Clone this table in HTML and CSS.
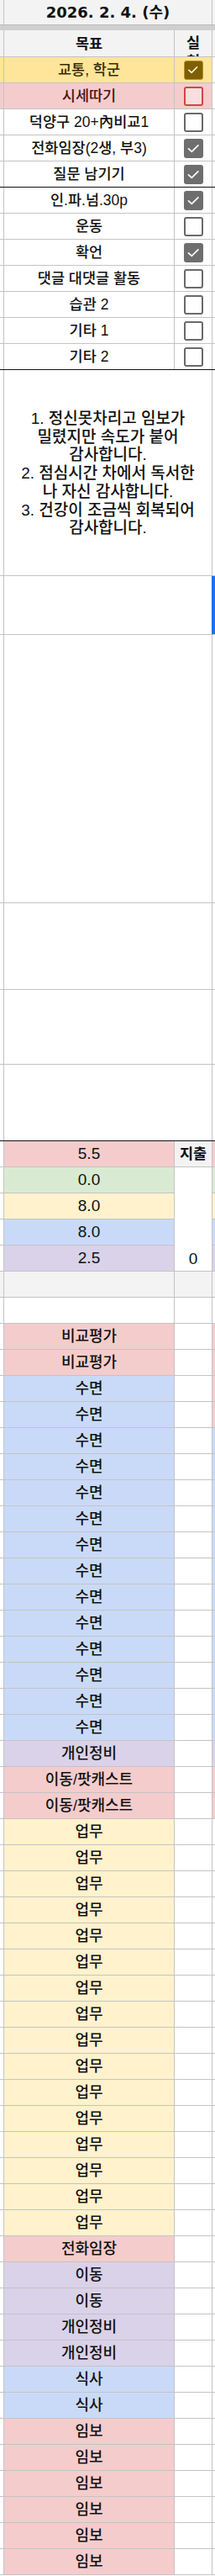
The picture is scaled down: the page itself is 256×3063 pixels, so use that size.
FILE: index.html
```html
<!DOCTYPE html>
<html lang="ko">
<head>
<meta charset="utf-8">
<link rel="stylesheet" href="styles.css">
</head>
<body>
<div class="sheet">
  <div class="row date">
    <div class="c gray"></div>
    <div class="c gray span2 datetxt">2026. 2. 4. (수)</div>
    <div class="c gray"></div>
  </div>
  <div class="freeze"></div>
  <div class="row head">
    <div class="c gray"></div>
    <div class="c gray bold">목표</div>
    <div class="c gray bold hchk">실<br>천</div>
    <div class="c gray"></div>
  </div>

  <div class="goals">
    <div class="row">
      <div class="c y2"></div>
      <div class="c y2 dk">교통, 학군</div>
      <div class="c y2"><span class="cb on gold"><svg viewBox="0 0 23 23"><path d="M5.5 11.8l3.8 3.6 7.6-7.6"/></svg></span></div>
      <div class="c"></div>
    </div>
    <div class="row">
      <div class="c pink"></div>
      <div class="c pink rd">시세따기</div>
      <div class="c pink"><span class="cb red"></span></div>
      <div class="c"></div>
    </div>
    <div class="row">
      <div class="c"></div>
      <div class="c">덕양구 20+內비교1</div>
      <div class="c"><span class="cb"></span></div>
      <div class="c"></div>
    </div>
    <div class="row">
      <div class="c"></div>
      <div class="c">전화임장(2생, 부3)</div>
      <div class="c"><span class="cb on"><svg viewBox="0 0 23 23"><path d="M5.5 11.8l3.8 3.6 7.6-7.6"/></svg></span></div>
      <div class="c"></div>
    </div>
    <div class="row thick">
      <div class="c"></div>
      <div class="c">질문 남기기</div>
      <div class="c"><span class="cb on"><svg viewBox="0 0 23 23"><path d="M5.5 11.8l3.8 3.6 7.6-7.6"/></svg></span></div>
      <div class="c"></div>
    </div>
    <div class="row">
      <div class="c"></div>
      <div class="c">인.파.넘.30p</div>
      <div class="c"><span class="cb on"><svg viewBox="0 0 23 23"><path d="M5.5 11.8l3.8 3.6 7.6-7.6"/></svg></span></div>
      <div class="c"></div>
    </div>
    <div class="row">
      <div class="c"></div>
      <div class="c">운동</div>
      <div class="c"><span class="cb"></span></div>
      <div class="c"></div>
    </div>
    <div class="row">
      <div class="c"></div>
      <div class="c">확언</div>
      <div class="c"><span class="cb on"><svg viewBox="0 0 23 23"><path d="M5.5 11.8l3.8 3.6 7.6-7.6"/></svg></span></div>
      <div class="c"></div>
    </div>
    <div class="row">
      <div class="c"></div>
      <div class="c">댓글 대댓글 활동</div>
      <div class="c"><span class="cb"></span></div>
      <div class="c"></div>
    </div>
    <div class="row">
      <div class="c"></div>
      <div class="c">습관 2</div>
      <div class="c"><span class="cb"></span></div>
      <div class="c"></div>
    </div>
    <div class="row">
      <div class="c"></div>
      <div class="c">기타 1</div>
      <div class="c"><span class="cb"></span></div>
      <div class="c"></div>
    </div>
    <div class="row thick">
      <div class="c"></div>
      <div class="c">기타 2</div>
      <div class="c"><span class="cb"></span></div>
      <div class="c"></div>
    </div>
  </div>

  <div class="row h245">
    <div class="c"></div>
    <div class="c span2 note">1. 정신못차리고 임보가<br>밀렸지만 속도가 붙어<br>감사합니다.<br>2. 점심시간 차에서 독서한<br>나 자신 감사합니다.<br>3. 건강이 조금씩 회복되어<br>감사합니다.</div>
    <div class="c"></div>
  </div>
  <div class="row h70">
    <div class="c"></div>
    <div class="c span2"></div>
    <div class="c sel"></div>
  </div>
  <div class="row h319">
    <div class="c"></div>
    <div class="c span2"></div>
    <div class="c"></div>
  </div>
  <div class="row h103">
    <div class="c"></div>
    <div class="c span2"></div>
    <div class="c"></div>
  </div>
  <div class="row h89">
    <div class="c"></div>
    <div class="c span2"></div>
    <div class="c"></div>
  </div>
  <div class="row h91 thick">
    <div class="c"></div>
    <div class="c span2"></div>
    <div class="c"></div>
  </div>

  <div class="sum">
    <div class="c"></div>
    <div class="c pink num">5.5</div>
    <div class="c gray bold">지출</div>
    <div class="c pink"></div>

    <div class="c"></div>
    <div class="c green num">0.0</div>
    <div class="c zero num">0</div>
    <div class="c green"></div>

    <div class="c"></div>
    <div class="c yellow num">8.0</div>
    <div class="c yellow"></div>

    <div class="c"></div>
    <div class="c blue num">8.0</div>
    <div class="c blue"></div>

    <div class="c"></div>
    <div class="c purple num">2.5</div>
    <div class="c purple"></div>
  </div>
  <div class="row">
    <div class="c gray"></div>
    <div class="c gray"></div>
    <div class="c gray"></div>
    <div class="c gray"></div>
  </div>
  <div class="row">
    <div class="c"></div>
    <div class="c"></div>
    <div class="c"></div>
    <div class="c"></div>
  </div>

  <div id="sched" class="sched"></div>
</div>
<script src="app.js"></script>
</body>
</html>
```

FILE: app.js
```js
var items = [
  ["비교평가", 2, "pink", "pink"],
  ["수면", 2, "blue", "pink"],
  ["수면", 12, "blue", "blue"],
  ["개인정비", 1, "purple", "purple"],
  ["이동/팟캐스트", 2, "pink", "pink"],
  ["업무", 16, "yellow", ""],
  ["전화임장", 1, "pink", ""],
  ["이동", 2, "purple", ""],
  ["개인정비", 2, "purple", ""],
  ["식사", 2, "blue", ""],
  ["임보", 6, "pink", ""]
];
var host = document.getElementById("sched");
var html = "";
items.forEach(function (it) {
  for (var i = 0; i < it[1]; i++) {
    html += '<div class="row">' +
      '<div class="c"></div>' +
      '<div class="c ' + it[2] + '">' + it[0] + '</div>' +
      '<div class="c"></div>' +
      '<div class="c ' + it[3] + '"></div>' +
      '</div>';
  }
});
host.innerHTML = html;
```

FILE: styles.css
```css
html, body {
  margin: 0;
  padding: 0;
  background: #fff;
}
.sheet {
  width: 256px;
  overflow: hidden;
  font-family: "Liberation Sans", "Noto Sans CJK KR", sans-serif;
  font-size: 17.5px;
  font-weight: 500;
  color: #111;
}
.row {
  display: grid;
  grid-template-columns: 4px 202px 44px 3px;
  column-gap: 1px;
  background: #c4c4c4;
  border-bottom: 1px solid #c4c4c4;
  height: 31px;
  box-sizing: border-box;
}
.row.thick {
  border-bottom-color: #111;
}
.c {
  background: #fff;
  display: flex;
  align-items: center;
  justify-content: center;
  overflow: hidden;
  white-space: nowrap;
  line-height: 22px;
}
.span2 {
  grid-column: span 2;
}
.bold { font-weight: 700; }
.gray { background: #f3f3f3; }
.pink { background: #f4cccc; }
.blue { background: #c9daf8; }
.yellow { background: #fff2cc; }
.purple { background: #d9d2e9; }
.green { background: #d9ead3; }
.y2 { background: #ffe599; }
.dk { color: #3a2a00; }
.rd { color: #4a1414; }

.date {
  height: 29px;
  border-bottom: 0;
}
.datetxt {
  font-family: "DejaVu Sans", "Noto Sans CJK KR", sans-serif;
  font-weight: 700;
  font-size: 18px;
}
.freeze {
  height: 7px;
  background: #cfcfcf;
  border-top: 1px solid #bdbdbd;
  box-sizing: border-box;
}
.head {
  height: 32px;
}
.hchk {
  display: block;
  text-align: center;
  padding-top: 4px;
  white-space: normal;
}

.cb {
  width: 23px;
  height: 23px;
  box-sizing: border-box;
  border: 2px solid #6a6a6a;
  border-radius: 3px;
  display: block;
  background: #fff;
}
.cb svg {
  display: block;
  width: 100%;
  height: 100%;
}
.cb path {
  fill: none;
  stroke: #fff;
  stroke-width: 1.7;
  stroke-linecap: round;
  stroke-linejoin: round;
}
.cb.on {
  background: #6e6e6e;
  border: 0;
}
.cb.on svg {
  width: 23px;
  height: 23px;
}
.cb.gold {
  background: #7f6000;
  border: 1.5px solid #b8922a;
}
.cb.gold svg {
  width: 20px;
  height: 20px;
}
.cb.red {
  border-color: #cc4a3e;
  background: #f8dede;
}

.note {
  display: block;
  white-space: nowrap;
  text-align: center;
  font-size: 19px;
  line-height: 21.7px;
  padding-top: 47px;
  box-sizing: border-box;
}
.h245 { height: 245px; }
.h70 { height: 70px; }
.h319 { height: 319px; }
.h103 { height: 103px; }
.h89 { height: 89px; }
.h91 { height: 91px; }
.sel {
  background: #1a73e8;
  box-shadow: -1px 0 0 #1a73e8;
}

.sum {
  display: grid;
  grid-template-columns: 4px 202px 44px 3px;
  grid-template-rows: repeat(5, 30px);
  column-gap: 1px;
  row-gap: 1px;
  background: #c4c4c4;
  border-bottom: 1px solid #c4c4c4;
}
.num {
  font-size: 19px;
}
.zero {
  grid-column: 3;
  grid-row: 2 / span 4;
  align-items: flex-end;
  padding-bottom: 3px;
}
.sched {
  font-size: 18px;
}
```
